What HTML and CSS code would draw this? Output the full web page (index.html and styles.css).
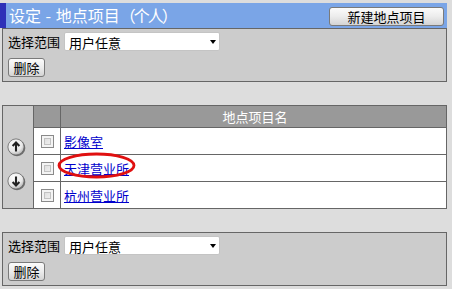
FILE: index.html
```html
<!DOCTYPE html>
<html lang="zh-CN">
<head>
  <meta charset="UTF-8">
  <title>设定 - 地点项目（个人）</title>
  <link rel="stylesheet" href="styles.css">
</head>
<body>
  <div id="page">
    <div class="title-bar">
      <span class="title">设定 - 地点项目<span class="paren">（个人）</span></span>
      <button class="btn btn-new">新建地点项目</button>
    </div>

    <div class="panel">
      <div class="range-row">
        <span class="label">选择范围</span>
        <span class="select-box"><select><option>用户任意</option></select></span>
      </div>
      <button class="btn btn-del">删除</button>
    </div>

    <div class="list-wrap">
      <table class="list">
        <tr class="head">
          <td class="move" rowspan="4">
            <span class="arrow">
              <svg width="19" height="19" viewBox="0 0 19 19">
                <defs>
                  <radialGradient id="g1" cx="0.4" cy="0.3" r="0.8">
                    <stop offset="0" stop-color="#ffffff"/>
                    <stop offset="0.6" stop-color="#e8e8e8"/>
                    <stop offset="1" stop-color="#9a9a9a"/>
                  </radialGradient>
                </defs>
                <circle cx="10" cy="10" r="8.3" fill="#6e6e6e"/>
                <circle cx="9" cy="9" r="8.1" fill="url(#g1)" stroke="#666" stroke-width="0.8"/>
                <path d="M9 13.6V4.6M5.6 8L9 4.6L12.4 8" fill="none" stroke="#222" stroke-width="2.1"/>
              </svg>
            </span>
            <span class="arrow">
              <svg width="19" height="19" viewBox="0 0 19 19">
                <defs>
                  <radialGradient id="g2" cx="0.4" cy="0.3" r="0.8">
                    <stop offset="0" stop-color="#ffffff"/>
                    <stop offset="0.6" stop-color="#e8e8e8"/>
                    <stop offset="1" stop-color="#9a9a9a"/>
                  </radialGradient>
                </defs>
                <circle cx="10" cy="10" r="8.3" fill="#6e6e6e"/>
                <circle cx="9" cy="9" r="8.1" fill="url(#g2)" stroke="#666" stroke-width="0.8"/>
                <path d="M9 4.4V13.4M5.6 10L9 13.4L12.4 10" fill="none" stroke="#222" stroke-width="2.1"/>
              </svg>
            </span>
          </td>
          <td class="check"></td>
          <td class="name">地点项目名</td>
        </tr>
        <tr>
          <td class="check"><input type="checkbox"></td>
          <td class="name"><a href="#">影像室</a></td>
        </tr>
        <tr>
          <td class="check"><input type="checkbox"></td>
          <td class="name"><a href="#">天津营业所</a></td>
        </tr>
        <tr>
          <td class="check"><input type="checkbox"></td>
          <td class="name"><a href="#">杭州营业所</a></td>
        </tr>
      </table>
      <svg class="mark" width="79" height="27" viewBox="0 0 79 27">
        <ellipse cx="39.5" cy="13.5" rx="37.5" ry="11.5" fill="none" stroke="#e01010" stroke-width="2.8"/>
      </svg>
    </div>

    <div class="panel">
      <div class="range-row">
        <span class="label">选择范围</span>
        <span class="select-box"><select><option>用户任意</option></select></span>
      </div>
      <button class="btn btn-del">删除</button>
    </div>
  </div>
</body>
</html>
```

FILE: styles.css
```css
body { margin: 0; background: #dddddd; font-family: "Noto Sans CJK SC", "DejaVu Sans", sans-serif; font-size: 13px; color: #000; }
#page { width: 447px; padding-top: 3px; }

.title-bar { display: flex; align-items: center; justify-content: space-between; box-sizing: border-box; height: 25px; background: #7aa5e7; border-left: 6px solid #2d30b8; padding: 0 3px 0 3px; }
.title { color: #fff; font-size: 16px; line-height: 25px; word-spacing: 1px; }
.paren { letter-spacing: -2px; }

.btn { font-family: inherit; font-size: 13px; color: #000; border: 1px solid #7a7a7a; border-radius: 3px; background: linear-gradient(#fbfbfb, #ececec 50%, #d4d4d4); padding: 0; line-height: 16px; cursor: pointer; }
.btn-new { width: 115px; height: 19px; margin-top: 2px; }
.btn-del { width: 37px; height: 19px; margin-top: 7px; }

.panel { margin-left: 2px; box-sizing: border-box; width: 445px; background: #cccccc; border: 1px solid #666; padding: 3px 5px 4px 5px; }
.range-row { display: flex; align-items: center; gap: 4px; height: 19px; }
.label { line-height: 19px; }
.select-box { position: relative; display: block; width: 156px; height: 19px; }
.select-box select { appearance: none; -webkit-appearance: none; width: 100%; height: 19px; box-sizing: border-box; border: 1px solid #c4c4c4; border-radius: 2px; background: #fff; font-family: inherit; font-size: 13px; padding: 0 0 0 4px; color: #000; }
.select-box::after { content: ""; position: absolute; right: 4px; top: 8px; border-left: 3px solid transparent; border-right: 3px solid transparent; border-top: 4px solid #000; }

.list-wrap { position: relative; margin: 23px 0 23px 2px; width: 445px; }
.list { border-collapse: collapse; width: 445px; border: 1px solid #666; background: #fff; }
.list td { border: 1px solid #666; padding: 0; }
.list tr { height: 27px; }
.list tr.head { height: 22px; }
.move { width: 30px; background: #cccccc; text-align: center; vertical-align: top; padding-top: 32px !important; }
.arrow { display: block; height: 19px; margin: 0 0 15px 4px; text-align: left; }
.arrow svg { display: block; }
.check { width: 26px; text-align: center; }
.head .check, .head .name { background: #999999; }
.head .name { color: #fff; text-align: center; }
.name { padding-left: 3px !important; }
.name a { color: #0000cc; text-decoration: underline; }

.check input { appearance: none; -webkit-appearance: none; width: 13px; height: 13px; margin: 4px 0 0 0; box-sizing: border-box; border: 1px solid #8a8a8a; background: linear-gradient(135deg, #d8d8d8, #f6f6f6); box-shadow: inset 0 0 0 2px #f4f4f4, inset 0 0 0 3px #c2c2c2; }

.mark { position: absolute; left: 55px; top: 47px; }
```
